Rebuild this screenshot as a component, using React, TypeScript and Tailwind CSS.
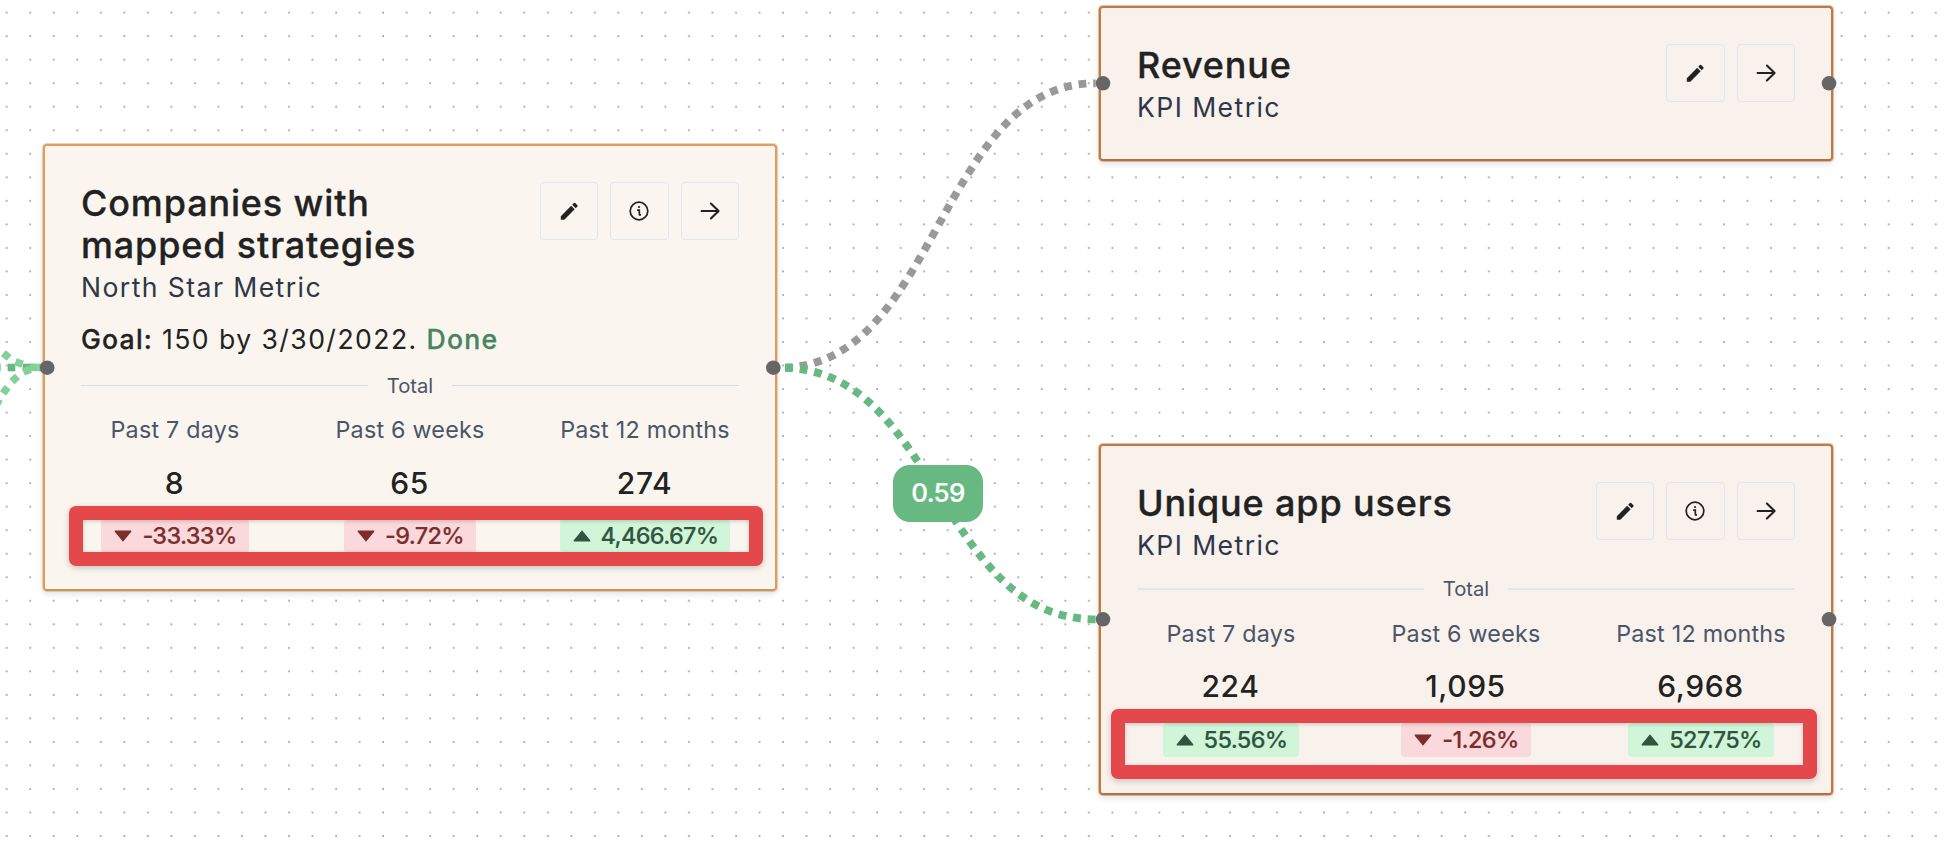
import React from "react";
import { MdModeEdit } from "react-icons/md";
import clsx from "clsx";

type Stat = { label: string; value: string; change: string; up: boolean };

type Metric = {
  title: string;
  kind: string;
  info?: boolean;
  goal?: { text: string; status: string };
  stats?: Stat[];
  className: string;
  ruleClass?: string;
};

const metrics: Metric[] = [
  {
    title: "Companies with mapped strategies",
    kind: "North Star Metric",
    info: true,
    goal: { text: "150 by 3/30/2022.", status: "Done" },
    stats: [
      { label: "Past 7 days", value: "8", change: "-33.33%", up: false },
      { label: "Past 6 weeks", value: "65", change: "-9.72%", up: false },
      { label: "Past 12 months", value: "274", change: "4,466.67%", up: true },
    ],
    className:
      "left-[43px] top-[144px] w-[734px] h-[447px] px-[36px] bg-[#faf5ef] border-[#dc9f60] border-b-[#cb9560] shadow-[0_0_0_1px_rgba(220,159,96,0.45),0_3px_6px_rgba(0,0,0,0.12)]",
    ruleClass: "h-px bg-[#d9deea]",
  },
  {
    title: "Revenue",
    kind: "KPI Metric",
    className:
      "left-[1099px] top-[6px] w-[734px] h-[155px] px-[36px] bg-[#f9f1ec] border-[#c27a45] border-b-[#b67040] shadow-[0_0_0_1px_rgba(194,122,69,0.45),0_3px_6px_rgba(0,0,0,0.12)]",
  },
  {
    title: "Unique app users",
    kind: "KPI Metric",
    info: true,
    stats: [
      { label: "Past 7 days", value: "224", change: "55.56%", up: true },
      { label: "Past 6 weeks", value: "1,095", change: "-1.26%", up: false },
      { label: "Past 12 months", value: "6,968", change: "527.75%", up: true },
    ],
    className:
      "left-[1099px] top-[444px] w-[734px] h-[351px] px-[36px] bg-[#f9f1ec] border-[#c27a45] border-b-[#b67040] shadow-[0_0_0_1px_rgba(194,122,69,0.45),0_3px_6px_rgba(0,0,0,0.12)]",
    ruleClass: "h-[2px] bg-[#e4e4ea]",
  },
];

const handles: [number, number][] = [
  [47.2, 367.7],
  [773.3, 367.7],
  [1103, 83.3],
  [1829, 83.3],
  [1103, 619.3],
  [1829, 619.3],
];

const incoming: [number, number, number, string][] = [
  [-3, 367.5, 0, "#82d196"],
  [11.5, 367.5, 0, "#68b881"],
  [26.5, 367.5, 0, "#68b881"],
  [6.2, 355.5, 40, "#82d196"],
  [19, 363, 20, "#82d196"],
  [33.5, 367.3, 4, "#82d196"],
  [-2.5, 402.5, -62, "#82d196"],
  [5.3, 390.3, -54, "#82d196"],
  [14.7, 379, -42, "#82d196"],
  [27, 370.6, -22, "#82d196"],
  [41, 367.5, 0, "#82d196"],
];

function IconButton({ label, children }: { label: string; children: React.ReactNode }) {
  return (
    <button
      aria-label={label}
      className="flex h-[58px] w-[58.5px] items-center justify-center rounded-[4px] border border-[#e0e7f2] text-[#222]"
    >
      {children}
    </button>
  );
}

function InfoIcon() {
  return (
    <svg width="22" height="22" viewBox="-11 -11 22 22" fill="none" stroke="currentColor">
      <circle r="8.8" strokeWidth="1.7" />
      <circle cy="-4" r="1.1" fill="currentColor" stroke="none" />
      <path d="M-1.9 -0.9H0.3V3.6M-0.2 3.8H2" strokeWidth="1.7" />
    </svg>
  );
}

function ArrowIcon() {
  return (
    <svg width="22" height="22" viewBox="-11 -11 22 22" fill="none" stroke="currentColor" strokeWidth="2.1" strokeLinecap="round" strokeLinejoin="round">
      <path d="M-8.4 0H8.4M0.9 -7.4L8.6 0L0.9 7.4" />
    </svg>
  );
}

function Triangle({ up }: { up: boolean }) {
  return (
    <svg width="18" height="12" viewBox="0 0 18 12" className={clsx("shrink-0", up && "rotate-180")}>
      <path d="M1.4 1.2H16.6L9 10.6Z" fill="currentColor" stroke="currentColor" strokeWidth="1.6" strokeLinejoin="round" />
    </svg>
  );
}

function StatColumn({ stat }: { stat: Stat }) {
  return (
    <div className="flex flex-1 flex-col items-center">
      <div className="text-[23.3px] leading-[28px] tracking-[0.22px] text-[#4a5568]">{stat.label}</div>
      <div className="mt-[20.5px] pr-px text-[30px] leading-[36px] font-medium tracking-[0.6px] text-[#222]">
        {stat.value}
      </div>
      <div
        className={clsx(
          "mt-[18.5px] flex h-[34px] items-center gap-[10px] rounded-[4px] pr-[12px] pl-[13px] text-[23.5px] leading-[34px] font-medium tracking-[-0.68px] [-webkit-text-stroke:0.15px]",
          stat.up ? "bg-[#d0f5d8] text-[#2f5540]" : "bg-[#f9d9db] text-[#7d2d2c]",
        )}
      >
        <Triangle up={stat.up} />
        {stat.change}
      </div>
    </div>
  );
}

function MetricCard({ metric }: { metric: Metric }) {
  return (
    <section className={clsx("absolute rounded-[4px] border-2 pt-[36px]", metric.className)}>
      <header className="flex items-start justify-between">
        <div>
          <h2 className="max-w-[400px] pt-px text-[36px] leading-[41.7px] font-medium tracking-[0.85px] text-[#222] [-webkit-text-stroke:0.3px]">
            {metric.title}
          </h2>
          <p className="mt-[1.5px] text-[26.6px] leading-[38px] tracking-[1.42px] text-[#2d3748]">{metric.kind}</p>
        </div>
        <div className="flex gap-[12px]">
          <IconButton label="Edit">
            <MdModeEdit size={22.5} />
          </IconButton>
          {metric.info && (
            <IconButton label="Details">
              <InfoIcon />
            </IconButton>
          )}
          <IconButton label="Open">
            <ArrowIcon />
          </IconButton>
        </div>
      </header>
      {metric.goal && (
        <p className="mt-[14px] pb-[3px] text-[26.6px] leading-[38px] tracking-[1.43px] text-[#222]">
          <span className="font-medium tracking-[1.2px] [-webkit-text-stroke:0.3px]">Goal:</span> {metric.goal.text}{" "}
          <span className="font-medium tracking-[1.25px] text-[#48845f] [-webkit-text-stroke:0.3px]">
            {metric.goal.status}
          </span>
        </p>
      )}
      {metric.stats && (
        <>
          <div className="mt-[13px] flex items-center gap-[19px] text-[20.2px] leading-[24px] text-[#4a5568]">
            <span className={clsx("flex-1", metric.ruleClass)} />
            Total
            <span className={clsx("flex-1", metric.ruleClass)} />
          </div>
          <div className="-mx-[23.5px] mt-[18.5px] flex">
            {metric.stats.map((s) => (
              <StatColumn key={s.label} stat={s} />
            ))}
          </div>
        </>
      )}
    </section>
  );
}

export default function App() {
  return (
    <main className="relative h-[852px] w-[1952px] overflow-hidden bg-white font-['Inter',sans-serif]">
      <svg className="absolute inset-0" width="1952" height="852">
        <defs>
          <pattern id="dots" x="6.7" y="12.7" width="23.525" height="23.525" patternUnits="userSpaceOnUse" patternTransform="translate(-5 -5)">
            <circle cx="5" cy="5" r="0.78" fill="#5c5c5c" />
          </pattern>
        </defs>
        <rect width="1952" height="852" fill="url(#dots)" />
        {incoming.map(([x, y, angle, fill], i) => (
          <rect key={i} x="-3.8" y="-3.8" width="7.6" height="7.6" fill={fill} transform={`translate(${x} ${y}) rotate(${angle})`} />
        ))}
        <g fill="none" strokeWidth="7.84" strokeDasharray="7.84 6.86" strokeDashoffset="-4.4">
          <path d="M780.6 367.7C938.2 367.7 938.2 83.3 1095.7 83.3" stroke="#999" />
          <path d="M780.6 367.7C938.2 367.7 938.2 619.3 1095.7 619.3" stroke="#68b881" />
        </g>
      </svg>

      <div className="absolute top-[465px] left-[893px] flex h-[57px] w-[90px] items-center justify-center rounded-[17px] bg-[#68b881] pb-[2px] text-[26px] font-medium tracking-[-0.6px] text-white [-webkit-text-stroke:0.2px]">
        0.59
      </div>

      {metrics.map((m) => (
        <MetricCard key={m.title} metric={m} />
      ))}

      <svg className="absolute inset-0" width="1952" height="852">
        {handles.map(([x, y]) => (
          <circle key={`${x}-${y}`} cx={x} cy={y} r="7.3" fill="#666" />
        ))}
      </svg>

      <div className="absolute top-[506px] left-[69px] h-[60px] w-[694px] rounded-[7px] border-[14px] border-[#e5484a] shadow-[0_2px_6px_rgba(0,0,0,0.2),inset_0_1px_4px_rgba(0,0,0,0.2)]" />
      <div className="absolute top-[709px] left-[1111px] h-[70px] w-[706px] rounded-[7px] border-[14px] border-[#e5484a] shadow-[0_2px_6px_rgba(0,0,0,0.2),inset_0_1px_4px_rgba(0,0,0,0.2)]" />
    </main>
  );
}
